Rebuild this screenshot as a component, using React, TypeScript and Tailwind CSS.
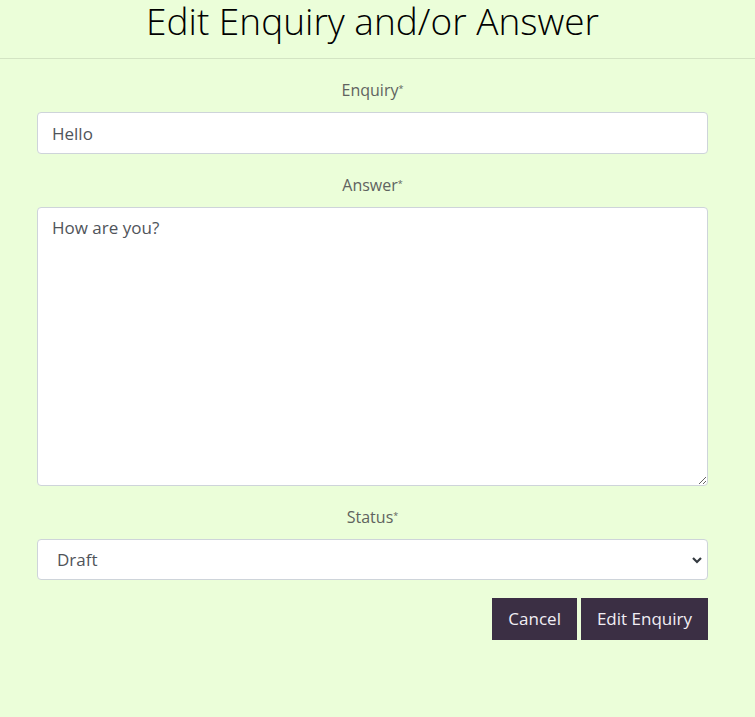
import { useState } from 'react';

export default function App() {
  const [enquiry, setEnquiry] = useState('Hello');
  const [answer, setAnswer] = useState('How are you?');
  const [status, setStatus] = useState('draft');

  return (
    <div
      className="min-h-[717px] w-full bg-[#ebfed9] text-[#212529]"
      style={{ fontFamily: '"Open Sans", "Liberation Sans", sans-serif' }}
    >
      {/* Title */}
      <div className="h-[59px] border-b border-[#d3e4c3] pr-[10px] pt-[0px]">
        <h2 className="text-center text-[37px] font-light leading-[42px] text-black">
          Edit Enquiry and/or Answer
        </h2>
      </div>

      {/* Form */}
      <form className="pl-[37px] pr-[47px] pt-[19px]" onSubmit={e => e.preventDefault()}>
        <div className="mb-[19px]">
          <label className="mb-[10px] block text-center text-[16px] leading-[24px] text-[#5f6360]">
            Enquiry<sup className="text-[9px]">*</sup>
          </label>
          <input
            value={enquiry}
            onChange={e => setEnquiry(e.target.value)}
            className="block h-[42px] w-full rounded-[4px] border border-[#ced4da] bg-white px-[14px] text-[17px] text-[#50545a] outline-none"
          />
        </div>

        <div className="mb-[19px]">
          <label className="mb-[10px] block text-center text-[16px] leading-[24px] text-[#5f6360]">
            Answer<sup className="text-[9px]">*</sup>
          </label>
          <textarea
            value={answer}
            onChange={e => setAnswer(e.target.value)}
            className="block h-[279px] w-full rounded-[4px] border border-[#ced4da] bg-white px-[14px] py-[7px] text-[17px] leading-[25px] text-[#50545a] outline-none"
          />
        </div>

        <div className="mb-[18px]">
          <label className="mb-[10px] block text-center text-[16px] leading-[24px] text-[#5f6360]">
            Status<sup className="text-[9px]">*</sup>
          </label>
          <div className="relative">
            <select
              value={status}
              onChange={e => setStatus(e.target.value)}
              className="block h-[41px] w-full appearance-none rounded-[4px] border border-[#ced4da] bg-white px-[19px] text-[17px] text-[#50545a] outline-none"
            >
              <option value="draft">Draft</option>
              <option value="published">Published</option>
            </select>
            <svg
              className="pointer-events-none absolute right-[5px] top-1/2 -translate-y-1/2"
              width="12"
              height="10"
              viewBox="0 0 12 10"
            >
              <path d="M2 3 L6 7 L10 3" fill="none" stroke="#343a40" strokeWidth="2.2" />
            </svg>
          </div>
        </div>

        <div className="flex justify-end gap-[4px]">
          <button
            type="button"
            className="h-[42px] bg-[#3b2f44] px-[16px] text-[17px] text-[#f1eef4]"
          >
            Cancel
          </button>
          <button
            type="submit"
            className="h-[42px] bg-[#3b2f44] px-[16px] text-[17px] text-[#f1eef4]"
          >
            Edit Enquiry
          </button>
        </div>
      </form>
    </div>
  );
}
